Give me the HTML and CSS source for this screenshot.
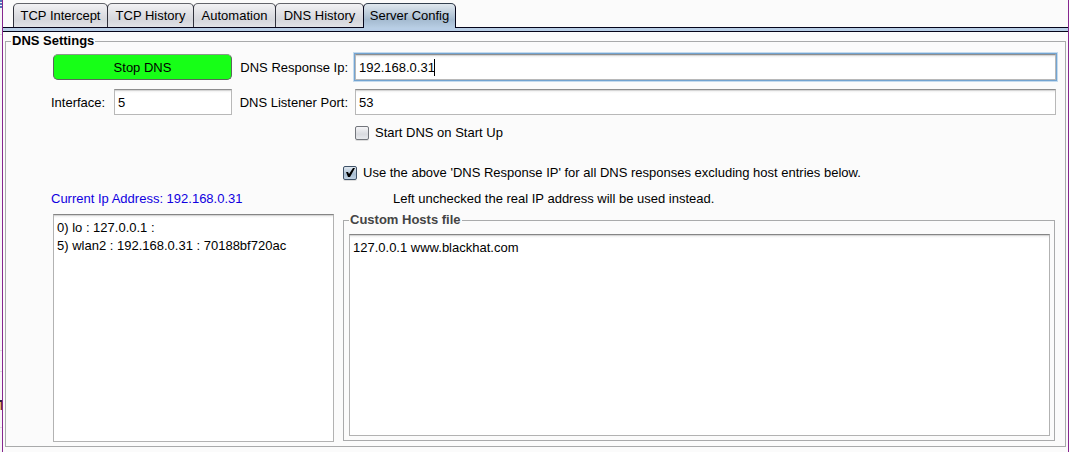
FILE: index.html
```html
<!DOCTYPE html>
<html lang="en">
<head>
<meta charset="utf-8">
<title>Server Config</title>
<link rel="stylesheet" href="styles.css">
</head>
<body>
<svg class="backdrop" width="2" height="452" viewBox="0 0 2 452" aria-hidden="true">
  <path fill="#5577bb" d="M0 0h2v2H0zM0 3h2v2H0zM0 6h2v2H0z"/>
  <path fill="#dddddd" d="M0 34h2v1H0zM0 350h2v1H0zM0 371h2v1H0zM0 427h2v1H0z"/>
  <path fill="#332244" d="M0 400h2v2H0z"/>
  <path fill="#e8b070" d="M0 402h1v8H0z"/>
  <path fill="#773333" d="M1 402h1v8H1z"/>
</svg>
<main class="window">
  <nav class="tabs" role="tablist">
    <button class="tab tab-intercept" role="tab">TCP Intercept</button>
    <button class="tab tab-tcp" role="tab">TCP History</button>
    <button class="tab tab-automation" role="tab">Automation</button>
    <button class="tab tab-dns" role="tab">DNS History</button>
    <button class="tab tab-config selected" role="tab" aria-selected="true">Server Config</button>
  </nav>
  <div class="tab-line"></div>
  <fieldset class="group settings">
    <legend>DNS Settings</legend>
    <div class="fields">
      <button class="stop">Stop DNS</button>
      <label class="caption" for="response">DNS Response Ip:</label>
      <div class="entry">
        <input class="field focused" id="response" type="text" value="192.168.0.31">
        <span class="caret"></span>
      </div>
      <div class="interface">
        <label for="interface">Interface:</label>
        <input class="field" id="interface" type="text" value="5">
      </div>
      <label class="caption" for="port">DNS Listener Port:</label>
      <input class="field" id="port" type="text" value="53">
      <label class="check startup"><input type="checkbox">Start DNS on Start Up</label>
    </div>
    <div class="lower">
      <div class="left">
        <p class="address">Current Ip Address: 192.168.0.31</p>
        <textarea class="area list" aria-label="Interfaces" readonly>0) lo : 127.0.0.1 :
5) wlan2 : 192.168.0.31 : 70188bf720ac</textarea>
      </div>
      <div class="right">
        <label class="check"><input type="checkbox" checked>Use the above 'DNS Response IP' for all DNS responses excluding host entries below.</label>
        <p class="note">Left unchecked the real IP address will be used instead.</p>
        <fieldset class="group hosts">
          <legend>Custom Hosts file</legend>
          <textarea class="area" aria-label="Custom Hosts file">127.0.0.1 www.blackhat.com</textarea>
        </fieldset>
      </div>
    </div>
  </fieldset>
</main>
</body>
</html>
```
FILE: styles.css
```css
* { box-sizing: border-box; }

body {
  margin: 0;
  height: 100vh;
  display: flex;
  overflow: hidden;
  background: #f8f8f8;
  color: #000;
  font: 13px/16px "Liberation Sans", Arial, sans-serif;
}

button, input, textarea { font: inherit; color: inherit; margin: 0; }
p { margin: 0; }

.backdrop { flex: none; }

.window {
  flex: 1;
  min-width: 0;
  display: flex;
  flex-direction: column;
  padding-bottom: 5px;
  border: solid #86278f;
  border-width: 0 1px;
  background: #fbfbfb;
}

.tabs { display: flex; padding: 3px 0 0 10px; }

.tab {
  height: 24px;
  margin-right: -1px;
  padding: 0;
  border: 1px solid #62646a;
  border-color: #62646a #30323c;
  border-bottom: 0;
  border-radius: 5px 5px 0 0;
  background: linear-gradient(#f2f2f4, #dcdde2 50%, #d5d7dc 70%, #e0e2e6);
}
.tab-intercept { width: 95px; }
.tab-tcp { width: 87px; }
.tab-automation { width: 83px; }
.tab-dns { width: 89px; }
.tab-config { width: 93px; }
.tab.selected {
  height: 25px;
  margin-bottom: -1px;
  border-color: #33404f #05051a;
  background: linear-gradient(#e0e8ef, #b3c5d6 50%, #a4bacf 65%, #b8cee4);
  position: relative;
}

.tab-line {
  height: 5px;
  border: solid #05051a;
  border-width: 1px 0;
  background: #b8cee6;
}

.group {
  min-width: 0;
  margin: 0;
  border: 1px solid #a9aaab;
  display: flex;
  flex-direction: column;
}
.group > legend { padding: 0 1px; font-weight: bold; }

.settings {
  flex: 1;
  margin: 1px 2px 0;
  padding: 4px 9px 4px 45px;
}
.settings > legend { margin-left: -40px; }

.fields {
  display: grid;
  grid-template-columns: 181px 111px 1fr;
  grid-template-rows: 28px 26px 20px;
  row-gap: 8px;
  column-gap: 6px;
  align-items: center;
}
.caption { padding: 2px 1px 0 0; text-align: right; white-space: nowrap; }

.stop {
  height: 26px;
  margin-left: 2px;
  padding: 2px 0 0;
  border: 1px solid #5c665c;
  border-top-color: #8a9a8a;
  border-radius: 5px;
  background: #17ff17;
}

.field {
  display: block;
  width: 100%;
  height: 26px;
  min-width: 0;
  padding: 0 3px;
  border: 1px solid #b8b8b8;
  border-top-color: #8e8e8e;
  border-radius: 0;
  outline: none;
  background: linear-gradient(#d6d6d6 1px, #f0f0f0 1px, #fff 3px);
}
.field.focused { box-shadow: 0 0 0 1px #73a4d1, 0 0 0 2px #c5dbee; }

.entry { position: relative; }
.caret {
  position: absolute;
  top: 5px;
  left: 79px;
  width: 1px;
  height: 17px;
  background: #000;
}

.interface { display: flex; align-items: center; justify-content: space-between; }
.interface label { padding-top: 2px; }
.interface .field { width: 118px; }

.check { display: flex; align-items: center; gap: 6px; white-space: nowrap; }
.startup { grid-column: 3; }
.check input {
  appearance: none;
  flex: none;
  width: 14px;
  height: 14px;
  border: 1px solid #73767c;
  border-radius: 2px;
  background: linear-gradient(#f5f5f7, #d9dbe0 60%, #e8eaed);
  box-shadow: 0 1px #dddddd;
}
.check input:checked {
  position: relative;
  border-color: #3f5268;
  background: linear-gradient(#e0e8f0, #a9bed2 60%, #c0d2e4);
}
.check input:checked::after {
  content: "";
  position: absolute;
  inset: 0;
  background: #000;
  clip-path: polygon(2px 5px, 4px 5px, 5px 7px, 9px 1px, 11px 1px, 6px 10px, 4px 10px);
}

.lower {
  flex: 1;
  min-height: 0;
  display: grid;
  grid-template-columns: 283px 1fr;
  gap: 9px;
  padding-top: 22px;
}
.left, .right { display: flex; flex-direction: column; min-height: 0; min-width: 0; }
.address { margin-top: 26px; color: #1000e0; }
.note { margin: 10px 0 5px 50px; }
.hosts { flex: 1; min-height: 0; margin: 0 1px 1px 0; padding: 6px 4px 4px 5px; }
.hosts > legend { margin-left: 0; color: #444; }

.area {
  flex: 1;
  display: block;
  min-height: 0;
  width: 100%;
  padding: 4px 3px;
  resize: none;
  outline: none;
  border: 1px solid #b2b2b2;
  border-top-color: #858585;
  border-radius: 0;
  background: linear-gradient(#d6d6d6 1px, #f0f0f0 1px, #fff 3px);
  line-height: 18px;
}
.list { width: auto; margin: 7px 0 0 2px; }
```
